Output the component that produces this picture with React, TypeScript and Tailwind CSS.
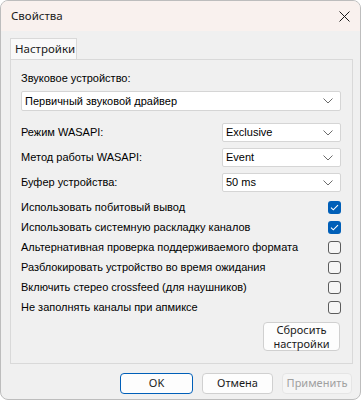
import React from "react";

const Chevron = () => (
  <svg width="10" height="6" viewBox="0 0 10 6" className="shrink-0">
    <path d="M0.5 0.5 L5 5 L9.5 0.5" fill="none" stroke="#6b6b6b" strokeWidth="1" />
  </svg>
);

const Select = ({ value, h }: { value: string; h: string }) => (
  <div className={`flex items-center justify-between bg-white border border-[#d5d5d5] rounded-[2px] pl-[3px] pr-[7px] ${h}`}>
    <span>{value}</span>
    <Chevron />
  </div>
);

const Checkbox = ({ checked }: { checked: boolean }) =>
  checked ? (
    <div className="w-[13px] h-[13px] rounded-[3px] bg-[#005fb8] flex items-center justify-center">
      <svg width="9" height="7" viewBox="0 0 9 7">
        <path d="M1 3.6 L3.3 5.8 L8 1.2" fill="none" stroke="#ffffff" strokeWidth="1.1" />
      </svg>
    </div>
  ) : (
    <div className="w-[13px] h-[13px] rounded-[3px] border border-[#5c5c5c] bg-[#f6f6f6]" />
  );

const rows: [string, boolean][] = [
  ["Использовать побитовый вывод", true],
  ["Использовать системную раскладку каналов", true],
  ["Альтернативная проверка поддерживаемого формата", false],
  ["Разблокировать устройство во время ожидания", false],
  ["Включить стерео crossfeed (для наушников)", false],
  ["Не заполнять каналы при апмиксе", false],
];

export default function App() {
  return (
    <div className="w-[362px] h-[403px] bg-white">
      <div className="w-[361px] h-[400px] rounded-[8px] border border-[#bdbdbd] bg-[#f0f0f0] overflow-hidden flex flex-col text-[11px] text-black font-['Liberation_Sans',Arial,sans-serif]">
        <div className="h-[30px] shrink-0 bg-[#f9f1ee] flex items-center justify-between pl-[10px] pr-[10px] font-['Noto_Sans',sans-serif]">
          <span className="text-[11.5px] text-[#1a1a1a]">Свойства</span>
          <svg width="11" height="11" viewBox="0 0 11 11">
            <path d="M0.5 0.5 L10.5 10.5 M10.5 0.5 L0.5 10.5" stroke="#1a1a1a" strokeWidth="1" />
          </svg>
        </div>
        <div className="pl-[9px] pr-[7px] pt-[7px] flex flex-col">
          <div className="flex">
            <div className="h-[21px] w-[67px] border border-b-0 border-[#d9d9d9] bg-[#f9f9f9] flex items-center pl-[4px] font-['Noto_Sans',sans-serif] text-[11.5px] text-[#1a1a1a]">
              Настройки
            </div>
          </div>
          <div className="h-[305px] border border-[#d9d9d9] bg-[#f0f0f0] pt-[11px] pl-[10px] pr-[11px] flex flex-col">
            <div className="h-[14px] leading-[14px]">Звуковое устройство:</div>
            <div className="mt-[6px]">
              <Select value="Первичный звуковой драйвер" h="h-[20px]" />
            </div>
            <div className="mt-[12px] flex flex-col gap-[6px]">
              {[
                ["Режим WASAPI:", "Exclusive"],
                ["Метод работы WASAPI:", "Event"],
                ["Буфер устройства:", "50 ms"],
              ].map(([l, v]) => (
                <div key={l} className="flex items-center justify-between h-[19px]">
                  <span>{l}</span>
                  <div className="w-[119px]">
                    <Select value={v} h="h-[19px]" />
                  </div>
                </div>
              ))}
            </div>
            <div className="mt-[5px] flex flex-col">
              {rows.map(([l, c]) => (
                <div key={l} className="h-[20px] flex items-center justify-between">
                  <span>{l}</span>
                  <Checkbox checked={c} />
                </div>
              ))}
            </div>
            <div className="mt-[5px] flex justify-end pr-[1px]">
              <div className="w-[77px] h-[29px] rounded-[4px] border border-[#d0d0d0] bg-[#fdfdfd] flex flex-col items-center justify-center font-['Noto_Sans',sans-serif] text-[11px] leading-[14px] text-[#1a1a1a]">
                <span>Сбросить</span>
                <span>настройки</span>
              </div>
            </div>
          </div>
          <div className="mt-[9px] flex justify-end gap-[9px] pr-[1px] font-['Noto_Sans',sans-serif] text-[11px]">
            <div className="w-[73px] h-[21px] rounded-[4px] border border-[#005fb8] bg-[#fdfdfd] text-[#1a1a1a] flex items-center justify-center">OK</div>
            <div className="w-[71px] h-[21px] rounded-[4px] border border-[#d0d0d0] bg-[#fdfdfd] text-[#1a1a1a] flex items-center justify-center">Отмена</div>
            <div className="w-[70px] h-[21px] rounded-[4px] border border-[#e5e5e5] bg-[#f5f5f5] text-[#a0a0a0] flex items-center justify-center">Применить</div>
          </div>
        </div>
      </div>
    </div>
  );
}
